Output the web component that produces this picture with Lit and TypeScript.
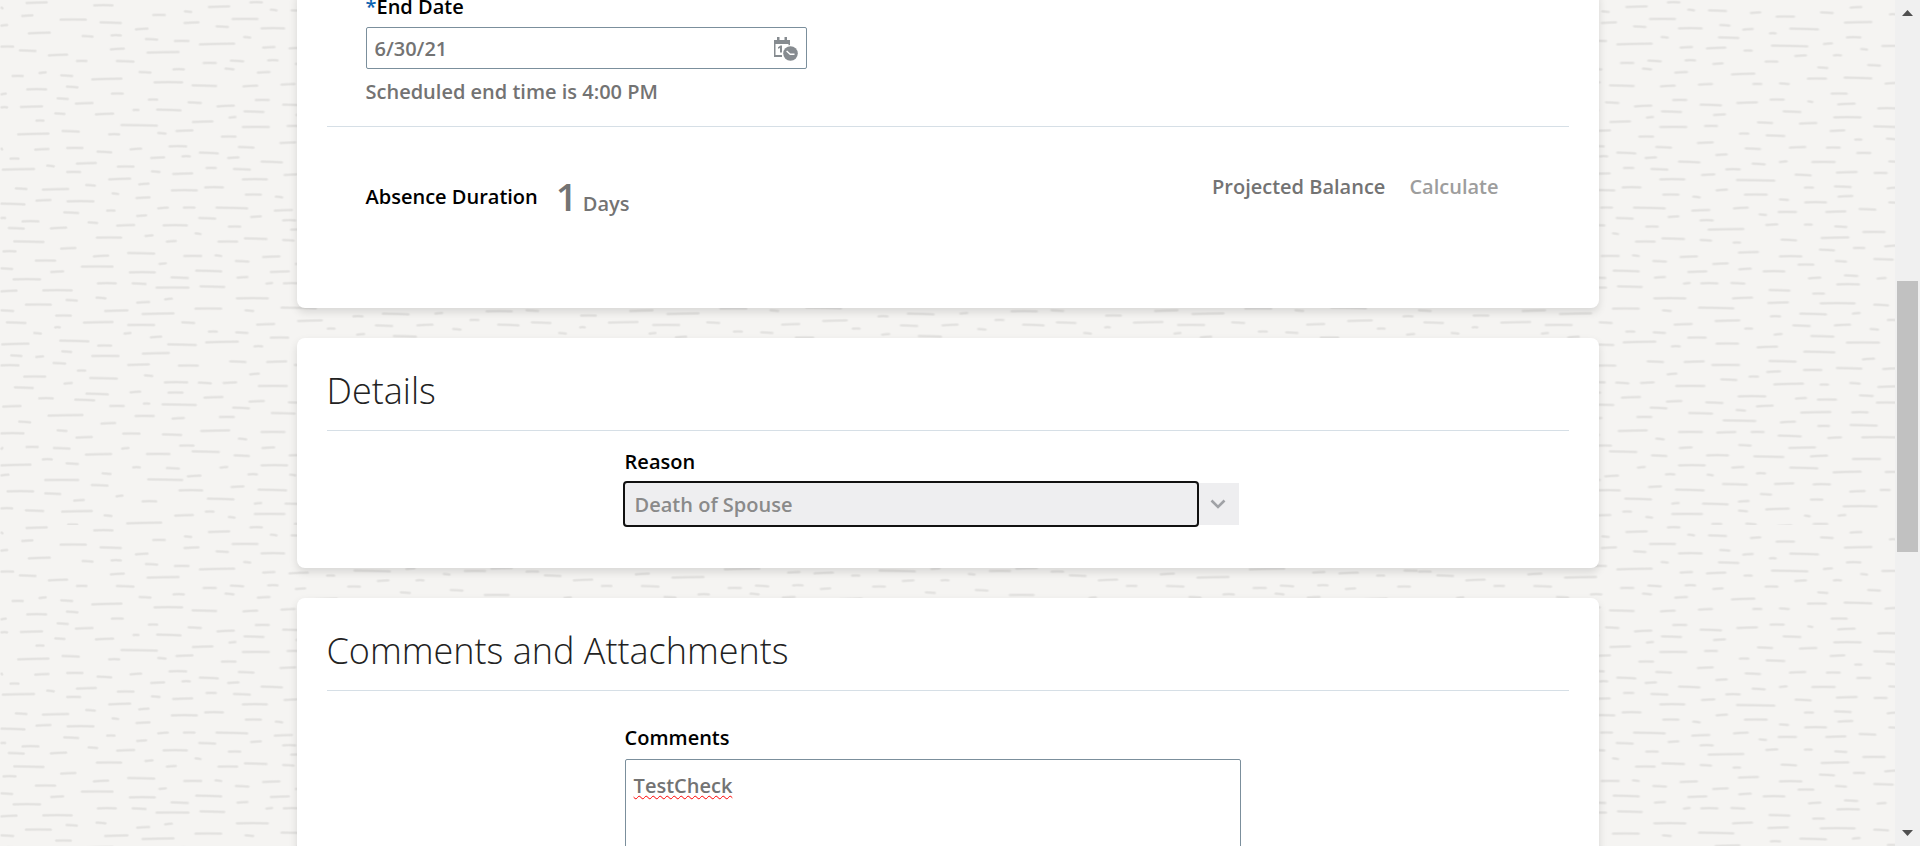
import { LitElement, html, svg, css } from "lit";
import { customElement, state } from "lit/decorators.js";

// Grain strokes of the page texture: left, right, y, in thirds of a pixel on a 1575-unit tile.
const GRAIN: number[][] = [
  [75,145,8],[278,342,16],[0,12,24],[62,102,47],[177,262,59],[297,367,68],[0,26,76],[455,499,45],[550,578,35],[622,692,20],[747,790,7],[808,834,30],
  [549,600,68],[693,777,57],[645,688,80],[403,447,87],[330,367,106],[243,282,109],[82,154,99],[780,857,85],[728,755,112],[595,707,132],[520,570,123],[433,476,118],
  [328,376,147],[0,44,140],[55,111,152],[142,206,165],[226,264,183],[346,405,184],[438,540,157],[606,652,189],[688,734,183],[785,828,142],[800,837,181],[672,705,207],
  [769,813,217],[516,556,208],[414,456,217],[114,142,218],[33,73,228],[179,221,227],[272,369,237],[459,551,247],[573,653,257],[726,776,258],[77,143,268],[196,237,261],
  [0,22,282],[331,373,281],[168,208,296],[223,282,310],[442,476,299],[561,607,308],[58,131,320],[0,26,322],[161,198,341],[283,344,342],[396,420,330],[467,546,330],
  [648,706,318],[763,811,300],[729,795,335],[684,711,352],[105,135,362],[360,475,376],[574,642,365],[724,811,381],[183,241,394],[50,150,402],[323,362,403],[470,501,400],
  [525,582,392],[661,711,410],[0,7,447],[101,150,448],[197,252,444],[288,338,456],[387,428,447],[504,563,439],[712,765,442],[449,497,473],[543,574,469],[595,658,459],
  [680,720,473],[27,60,476],[137,166,498],[226,292,490],[349,405,500],[780,850,486],[4,107,508],[197,245,516],[451,483,515],[515,581,521],[615,652,504],[697,754,508],
  [323,395,537],[724,805,538],[254,289,556],[413,450,552],[611,673,562],[43,84,566],[124,209,568],[511,595,571],[333,359,581],[405,453,593],[733,787,584],[823,851,591],
  [105,156,601],[198,285,604],[0,78,612],[470,508,624],[547,588,623],[645,746,624],[820,880,631],[317,348,632],[188,239,638],[407,443,647],[0,20,654],[593,650,655],
  [749,787,650],[63,120,664],[261,296,668],[347,407,676],[486,565,676],[22,76,685],[148,203,684],[682,725,680],[582,606,701],[432,462,707],[286,368,713],[38,135,725],
  [496,532,724],[651,716,725],[730,804,716],[179,231,745],[6,51,754],[380,467,760],[277,329,768],[548,608,768],[642,668,767],[785,843,770],[103,170,782],[703,750,784],
  [474,502,791],[241,342,800],[0,41,806],[149,194,815],[385,469,817],[584,668,813],[808,871,815],[36,125,838],[510,568,833],[708,747,832],[289,352,850],[393,441,851],
  [795,821,850],[465,570,863],[597,677,860],[0,54,873],[125,220,871],[285,321,894],[491,520,897],[706,808,895],[195,235,901],[407,452,907],[73,157,914],[0,44,932],
  [311,387,932],[582,668,926],[732,764,932],[423,525,941],[164,217,947],[16,81,968],[247,342,967],[380,467,975],[542,587,968],[767,827,973],[161,184,982],[98,127,1000],
  [369,396,1000],[622,655,995],[704,747,998],[448,488,1011],[808,869,1013],[176,270,1023],[2,90,1032],[290,338,1037],[500,592,1034],[614,718,1026],[759,791,1039],[182,218,1055],
  [424,511,1060],[272,360,1068],[29,69,1067],[104,134,1070],[0,60,1096],[156,200,1090],[380,451,1094],[532,598,1097],[686,741,1085],[797,863,1085],[229,260,1112],[430,461,1127],
  [746,781,1122],[68,140,1130],[266,355,1135],[189,220,1150],[490,566,1147],[592,637,1149],[666,713,1148],[772,865,1158],[40,103,1163],[387,425,1176],[501,552,1178],[255,328,1182],
  [609,672,1192],[113,163,1195],[221,287,1200],[744,796,1204],[427,452,1211],[483,592,1214],[5,66,1219],[326,376,1218],[695,751,1224],[141,252,1246],[402,466,1248],[811,888,1240],
  [513,556,1255],[655,706,1251],[53,95,1266],[300,350,1270],[0,75,1300],[168,204,1292],[225,280,1312],[365,423,1301],[484,548,1304],[599,692,1292],[780,858,1296],[712,743,1317],
  [0,12,1345],[75,118,1341],[157,213,1345],[362,390,1345],[536,585,1337],[573,661,1355],[253,338,1363],[436,513,1362],[699,751,1367],[783,827,1343],[124,160,1378],[195,238,1391],
  [0,96,1395],[395,424,1402],[496,541,1405],[657,686,1402],[780,866,1396],[303,336,1421],[0,30,1425],[131,239,1440],[440,551,1439],[559,606,1428],[741,775,1423],[271,327,1456],
  [690,735,1460],[18,104,1474],[131,185,1481],[345,372,1488],[534,611,1471],[771,863,1470],[218,256,1501],[423,473,1504],[619,705,1497],[760,788,1510],[0,41,1525],[73,134,1532],
  [182,280,1534],[613,645,1535],[309,339,1547],[521,583,1546],[760,858,1542],[682,708,1552],[377,488,1569],[200,236,1574],
  // right part of the tile
  [870,930,32],[996,1033,38],[1073,1134,50],[1206,1250,38],[1295,1336,22],[1413,1440,43],[904,940,76],[973,1010,88],[1053,1079,100],[1114,1206,87],[1278,1366,67],[1284,1333,112],
  [900,967,113],[864,928,144],[977,1007,152],[1059,1174,138],[1215,1248,131],[1390,1460,138],[1327,1353,148],[1129,1170,167],[1245,1275,166],[1348,1392,196],[883,920,191],[1040,1084,185],
  [1198,1234,203],[939,1015,222],[1167,1230,236],[1277,1366,234],[840,888,253],[1003,1036,252],[1083,1118,251],[1400,1440,250],[1238,1292,281],[845,915,315],[955,1023,308],[1055,1103,299],
  [1168,1189,305],[1258,1316,312],[1378,1440,325],[1094,1153,335],[885,927,344],[1246,1334,352],[1017,1068,368],[1143,1201,370],[858,903,378],[1366,1440,380],[1235,1285,392],[963,997,401],
  [1043,1105,407],[837,890,428],[1309,1336,419],[1404,1440,417],[1113,1168,442],[1224,1271,443],[980,1032,446],[892,932,464],[1315,1363,459],[1001,1046,492],[1083,1112,485],[1180,1256,486],
  [1411,1450,485],[849,895,524],[922,971,508],[1130,1184,525],[1254,1322,517],[1367,1412,519],[954,1075,541],[893,933,570],[1158,1191,563],[1248,1304,560],[1406,1440,564],[978,1052,584],
  [1083,1116,599],[1259,1309,589],[1159,1230,607],[1411,1450,608],[945,995,624],[1079,1140,636],[1322,1378,628],[1222,1288,635],[845,890,661],[1022,1050,644],[1042,1084,674],[1158,1187,674],
  [1249,1291,680],[869,982,688],[1333,1406,696],[845,885,721],[1208,1297,713],[944,972,728],[1088,1140,720],[1399,1440,738],[1305,1345,744],[1203,1254,750],[960,1026,757],[1083,1156,769],
  [1366,1430,778],[883,935,791],[1139,1192,794],[1251,1290,784],[961,1004,807],[1034,1105,814],[1278,1324,827],[1376,1409,835],[847,904,850],[937,985,850],[1170,1213,834],[1255,1329,853],
  [1052,1120,871],[942,1008,894],[1183,1224,881],[840,952,924],[1048,1116,908],[1205,1316,910],[1366,1416,915],[890,970,962],[1056,1092,949],[1144,1230,942],[1302,1331,940],[979,1008,986],
  [1123,1181,977],[1248,1302,975],[1407,1440,960],[1355,1386,988],[1067,1097,1003],[893,966,1031],[1177,1252,1009],[1016,1083,1041],[1284,1389,1028],[1156,1255,1056],[1332,1374,1077],[880,969,1095],
  [1052,1139,1084],[1045,1092,1115],[1155,1216,1110],[1254,1336,1105],[1393,1440,1106],[992,1026,1130],[907,961,1139],[1066,1161,1152],[1205,1236,1154],[1294,1331,1150],[1378,1440,1160],[959,1048,1189],
  [862,919,1208],[1131,1170,1195],[1197,1260,1199],[1323,1370,1187],[1014,1070,1218],[1374,1440,1208],[953,987,1231],[1147,1243,1237],[1300,1355,1237],[914,1018,1262],[1086,1137,1266],[1198,1239,1278],
  [1295,1382,1276],[895,958,1297],[998,1043,1296],[1079,1154,1308],[1228,1275,1313],[1330,1440,1312],[961,1004,1336],[1111,1197,1343],[864,936,1366],[1006,1102,1370],[1176,1233,1368],[1302,1392,1377],
  [866,890,1425],[940,982,1402],[1014,1047,1420],[1114,1204,1404],[1244,1334,1416],[1400,1450,1416],[912,992,1453],[1068,1132,1451],[1184,1242,1453],[1026,1065,1483],[1294,1346,1474],[1385,1421,1470],
  [852,935,1512],[960,998,1504],[1176,1219,1499],[960,993,1533],[1042,1118,1527],[1274,1382,1519],[1158,1181,1548],[1259,1288,1546],[880,916,1572],[982,1019,1572],[1078,1126,1577],[1184,1234,1572],
  // strip past the last visible column
  [1440,1570,60],[1470,1540,130],[1450,1530,210],[1490,1560,300],[1460,1530,420],[1480,1560,560],[1450,1520,700],[1490,1570,840],[1455,1540,934],[1490,1560,975],[1470,1545,1110],[1480,1560,1330],[1500,1560,1460],
];

@customElement("page-texture")
class PageTexture extends LitElement {
  static styles = css`
    :host { display: block; }
    .fill { display: block; width: 100%; height: 100%; }
    .soft { stroke: #edecea; stroke-width: 10; }
    .core { stroke: #e3e2e0; stroke-width: 5; }
    .line { fill: none; stroke-linecap: round; }
  `;

  private path() {
    return GRAIN.map(([a, b, y], i) => {
      const tilt = ((i * 7) % 3) - 1;
      const l = a + 5;
      const r = Math.max(l + 1, b - 5);
      return `M${l} ${y - tilt}Q${(l + r) / 2} ${y - 1} ${r} ${y + tilt}`;
    }).join("");
  }

  render() {
    const d = this.path();
    return html`<svg class="fill" aria-hidden="true">
      <defs>
        <pattern id="tile" width="525" height="525" patternUnits="userSpaceOnUse">
          ${svg`<g transform="scale(.33333)"><path class="line soft" d=${d} /><path class="line core" d=${d} /></g>`}
        </pattern>
        <pattern id="sheet" width="1417.5" height="525" patternUnits="userSpaceOnUse">
          <rect width="1417.5" height="525" fill="url(#tile)" />
        </pattern>
      </defs>
      <rect width="100%" height="100%" fill="url(#sheet)" />
    </svg>`;
  }
}

@customElement("app-root")
class AppRoot extends LitElement {
  @state() private endDate = "6/30/21";
  @state() private comments = "TestCheck";

  static styles = css`
    :host {
      display: flex;
      position: relative;
      height: 100vh;
      overflow: hidden;
      background: #f5f4f2;
      color: #000;
      font: 540 20px/28px "Open Sans", "Noto Sans", sans-serif;
    }
    *, *::before, *::after { box-sizing: border-box; }
    .texture { position: absolute; inset: 0; }
    .page {
      position: relative;
      flex: 1;
      min-width: 0;
      display: flex;
      flex-direction: column;
      align-items: center;
      gap: 30px;
      margin-top: -7px;
    }
    .card {
      flex: none;
      width: 100%;
      max-width: 1302px;
      padding: 29px 30px 43px;
      background: #fff;
      border-radius: 8px;
      box-shadow: 0 4px 8px rgba(0, 0, 0, 0.12);
    }
    .card.first { padding-top: 0; padding-bottom: 83px; border-radius: 0 0 8px 8px; }
    .title {
      margin: 0;
      padding-bottom: 15px;
      border-bottom: 1px solid #d6dfe6;
      color: #222;
      font-size: 36px;
      font-weight: 300;
      line-height: 48px;
    }
    .label { display: block; }
    .muted { color: #737373; }
    .dates { padding: 0 39px 20px; border-bottom: 1px solid #d6dfe6; }
    .required { color: #0b63b0; }
    .date-box {
      display: flex;
      align-items: center;
      width: 441px;
      height: 42px;
      margin: 6px 0 9px;
      padding: 1px 8px 0;
      border: 1px solid #7b8f9c;
      border-radius: 2px;
    }
    .date-input {
      flex: 1;
      min-width: 0;
      padding: 0;
      border: 0;
      outline: 0;
      background: none;
      color: #737373;
      font: inherit;
    }
    .icon-button { display: flex; padding: 0; border: 0; background: none; }
    .hint { margin: 0; }
    .summary { display: flex; justify-content: space-between; padding: 46px 70px 0 39px; }
    .duration { display: flex; gap: 18px; padding-top: 2px; }
    .duration .label { padding-top: 8px; }
    .amount { line-height: 42px; }
    .number { font-size: 38px; }
    .balance { display: flex; align-items: flex-start; gap: 24px; }
    .link { color: #9d9d9d; text-decoration: none; }
    .form { width: 616px; max-width: 100%; margin-left: 24%; padding-top: 17px; }
    .form.roomy { padding-top: 33px; }
    .combo { display: flex; width: 614px; max-width: 100%; height: 42px; margin-top: 7px; background: #eeeef0; }
    .select {
      flex: 1;
      min-width: 0;
      appearance: none;
      padding: 2px 10px 0;
      border: 0;
      border-radius: 2px;
      outline: 2px solid #111;
      background: #eeeef0;
      color: #8a8a8a;
      font: inherit;
    }
    .arrow { display: flex; align-items: center; justify-content: center; width: 42px; }
    .area {
      display: block;
      width: 100%;
      height: 150px;
      margin-top: 7px;
      padding: 12px 8px;
      border: 1px solid #7b8f9c;
      border-radius: 2px;
      outline: 0;
      resize: none;
      background: #fff;
      color: #737373;
      font: inherit;
      text-decoration: underline wavy #f00 1px;
      text-underline-offset: 2px;
      text-decoration-skip-ink: none;
    }
    .scrollbar {
      position: relative;
      flex: none;
      display: flex;
      flex-direction: column;
      align-items: center;
      justify-content: space-between;
      width: 25px;
      padding: 10px 2px;
      background: #f0f0f0;
    }
    .track { flex: 1; width: 100%; display: grid; grid-template-rows: 265fr 271fr 278fr; }
    .thumb { grid-row: 2; background: #c1c1c1; }
    .tip { display: block; }
  `;

  render() {
    return html`
      <page-texture class="texture"></page-texture>
      <main class="page">
        <section class="card first">
          <div class="dates">
            <label class="label" for="end"><span class="required">*</span>End Date</label>
            <div class="date-box">
              <input id="end" class="date-input" .value=${this.endDate}
                @input=${(e: Event) => (this.endDate = (e.target as HTMLInputElement).value)} />
              <button class="icon-button" type="button" aria-label="Select date and time">
                <svg width="24" height="24" viewBox="0 0 24 24" aria-hidden="true">
                  <path d="M0 3h3V0h2.500v3h5V0H13v3h3v6h-1.500V7h-13v11H8v2H0z" fill="#868b90" />
                  <path d="M4 10.200L6.500 8.500H8v7H6v-4.600l-2 .8z" fill="#868b90" />
                  <circle cx="16.500" cy="16.500" r="8.500" fill="#fff" />
                  <circle cx="16.500" cy="16.500" r="7.300" fill="#868b90" />
                  <path d="M12.600 14l3.600 3.200h4.300" fill="none" stroke="#fff" stroke-width="1.400" />
                </svg>
              </button>
            </div>
            <p class="hint muted">Scheduled end time is 4:00 PM</p>
          </div>
          <div class="summary">
            <div class="duration">
              <span class="label">Absence Duration</span>
              <span class="amount muted"><span class="number">1</span> Days</span>
            </div>
            <div class="balance">
              <span class="muted">Projected Balance</span>
              <a class="link" href="#">Calculate</a>
            </div>
          </div>
        </section>

        <section class="card">
          <h2 class="title">Details</h2>
          <div class="form">
            <label class="label" for="reason">Reason</label>
            <div class="combo">
              <select id="reason" class="select"><option>Death of Spouse</option></select>
              <span class="arrow">
                <svg width="16" height="10" viewBox="0 0 16 10" aria-hidden="true">
                  <path d="M1.500 1.500L8 8l6.500-6.500" fill="none" stroke="#a0a2a6" stroke-width="2.600" />
                </svg>
              </span>
            </div>
          </div>
        </section>

        <section class="card">
          <h2 class="title">Comments and Attachments</h2>
          <div class="form roomy">
            <label class="label" for="comments">Comments</label>
            <textarea id="comments" class="area" spellcheck="false" .value=${this.comments}
              @input=${(e: Event) => (this.comments = (e.target as HTMLTextAreaElement).value)}></textarea>
          </div>
        </section>
      </main>
      <div class="scrollbar" aria-hidden="true">
        <svg class="tip" width="11" height="6" viewBox="0 0 11 6"><path d="M0 6L5.500 0 11 6z" fill="#505050" /></svg>
        <div class="track"><div class="thumb"></div></div>
        <svg class="tip" width="11" height="6" viewBox="0 0 11 6"><path d="M0 0L5.500 6 11 0z" fill="#505050" /></svg>
      </div>
    `;
  }
}
